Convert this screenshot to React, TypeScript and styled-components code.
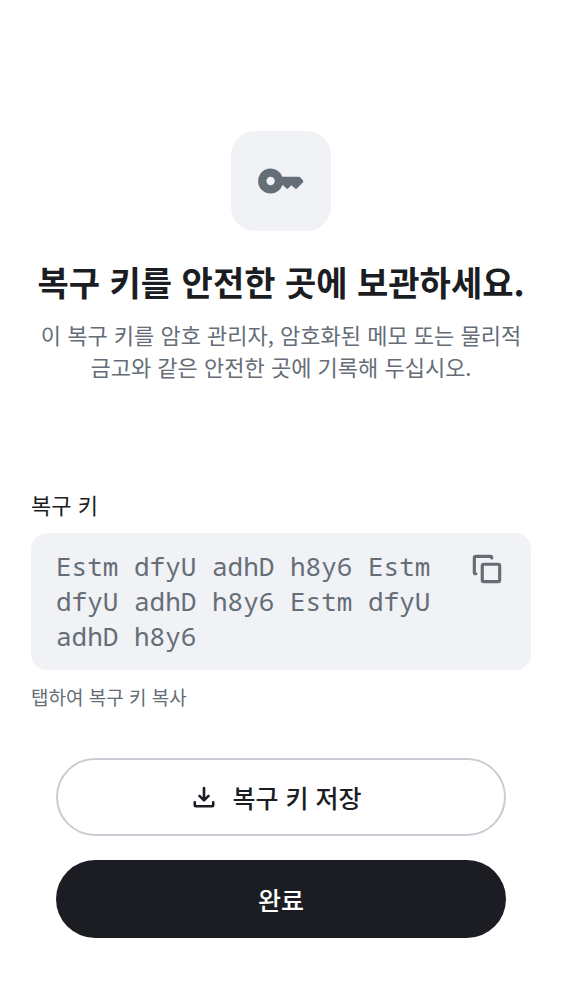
import React from "react";
import styled, { createGlobalStyle } from "styled-components";

const GlobalStyle = createGlobalStyle`
  *, *::before, *::after { box-sizing: border-box; }
  body {
    margin: 0;
    background: #ffffff;
    color: #1b1d22;
    font-family: "Noto Sans CJK KR", "Noto Sans", sans-serif;
    word-break: keep-all;
  }
`;

const Page = styled.main`
  display: flex;
  flex-direction: column;
  padding: 131px 31px 62px;
`;

const Header = styled.header`
  display: flex;
  flex-direction: column;
  align-items: center;
  text-align: center;
`;

const IconTile = styled.div`
  display: grid;
  place-items: center;
  width: 100px;
  height: 100px;
  border-radius: 24px;
  background: #f0f2f5;
  color: #656d77;
`;

const Title = styled.h1`
  margin: 29px 0 0;
  font-size: 34px;
  line-height: 44px;
  font-weight: 700;
`;

const Description = styled.p`
  margin: 14px 0 0;
  font-size: 22px;
  line-height: 32px;
  color: #656d77;
`;

const Field = styled.section`
  display: flex;
  flex-direction: column;
  margin-top: 106px;
`;

const Label = styled.label`
  font-size: 22px;
  line-height: 32px;
`;

const KeyBox = styled.div`
  display: flex;
  align-items: flex-start;
  gap: 16px;
  margin-top: 13px;
  padding: 16px 25px;
  border-radius: 16px;
  background: #f0f2f5;
  color: #656d77;
`;

const KeyText = styled.output`
  flex: 1;
  font-family: "Noto Sans Mono", "DejaVu Sans Mono", monospace;
  font-size: 26px;
  line-height: 35px;
`;

const CopyButton = styled.button`
  display: grid;
  place-items: center;
  width: 38px;
  height: 40px;
  padding: 0;
  border: 0;
  background: none;
  color: inherit;
  cursor: pointer;
`;

const Hint = styled.p`
  margin: 12px 0 0;
  font-size: 19px;
  line-height: 30px;
  color: #656d77;
`;

const Actions = styled.div`
  display: flex;
  flex-direction: column;
  gap: 24px;
  margin-top: 46px;
  padding: 0 25px;
`;

const ActionButton = styled.button<{ $primary?: boolean }>`
  display: flex;
  align-items: center;
  justify-content: center;
  gap: 16px;
  height: 78px;
  padding: ${({ $primary }) => ($primary ? "0 24px" : "0 32px 0 24px")};
  border: ${({ $primary }) => ($primary ? "0" : "2px solid #c8cdd4")};
  border-radius: 39px;
  background: ${({ $primary }) => ($primary ? "#1b1d22" : "#ffffff")};
  color: ${({ $primary }) => ($primary ? "#ffffff" : "#1b1d22")};
  font-family: inherit;
  font-size: 25px;
  font-weight: 500;
  line-height: 36px;
  cursor: pointer;
`;

const KeyIcon = () => (
  <svg width="50" height="50" viewBox="0 0 24 24" fill="currentColor" aria-hidden="true">
    <path
      fillRule="evenodd"
      d="M7 18a6 6 0 1 1 5.65-8h7.93a1 1 0 0 1 .71.3l1.2 1.3a.8.8 0 0 1-.02 1.1l-2.75 2.75a.8.8 0 0 1-1.12-.01L17 14l-1.5 1.5a.7.7 0 0 1-1 0L13 14h-.35A6 6 0 0 1 7 18Zm0-4a2 2 0 1 0 0-4 2 2 0 0 0 0 4Z"
    />
  </svg>
);

const CopyIcon = () => (
  <svg width="38" height="38" viewBox="0 0 24 24" fill="currentColor" aria-hidden="true">
    <path d="M14 5H5v9a1 1 0 1 1 0 2 2 2 0 0 1-2-2V5a2 2 0 0 1 2-2h9a2 2 0 0 1 2 2 1 1 0 1 1-2 0Z" />
    <path
      fillRule="evenodd"
      d="M8 10a2 2 0 0 1 2-2h9a2 2 0 0 1 2 2v9a2 2 0 0 1-2 2h-9a2 2 0 0 1-2-2v-9Zm2 0v9h9v-9h-9Z"
    />
  </svg>
);

const DownloadIcon = () => (
  <svg
    width="24"
    height="24"
    viewBox="0 0 24 24"
    fill="none"
    stroke="currentColor"
    strokeWidth="2.6"
    strokeLinecap="round"
    strokeLinejoin="round"
    aria-hidden="true"
  >
    <path d="M12 3v12M7.500 10.800l4.500 4.500 4.500-4.500" />
    <path d="M2.800 17.200v3.100a1 1 0 0 0 1 1h16.400a1 1 0 0 0 1-1v-3.100" />
  </svg>
);

const recoveryKey = "Estm dfyU adhD h8y6 Estm dfyU adhD h8y6 Estm dfyU adhD h8y6";

export default function App() {
  const copyKey = () => navigator.clipboard?.writeText(recoveryKey);

  return (
    <>
      <GlobalStyle />
      <Page lang="ko">
        <Header>
          <IconTile>
            <KeyIcon />
          </IconTile>
          <Title>복구 키를 안전한 곳에 보관하세요.</Title>
          <Description>
            이 복구 키를 암호 관리자, 암호화된 메모 또는 물리적 금고와 같은 안전한 곳에 기록해 두십시오.
          </Description>
        </Header>
        <Field>
          <Label htmlFor="recovery-key">복구 키</Label>
          <KeyBox>
            <KeyText id="recovery-key">{recoveryKey}</KeyText>
            <CopyButton type="button" aria-label="복구 키 복사" onClick={copyKey}>
              <CopyIcon />
            </CopyButton>
          </KeyBox>
          <Hint>탭하여 복구 키 복사</Hint>
        </Field>
        <Actions>
          <ActionButton type="button">
            <DownloadIcon />
            복구 키 저장
          </ActionButton>
          <ActionButton type="button" $primary>
            완료
          </ActionButton>
        </Actions>
      </Page>
    </>
  );
}
